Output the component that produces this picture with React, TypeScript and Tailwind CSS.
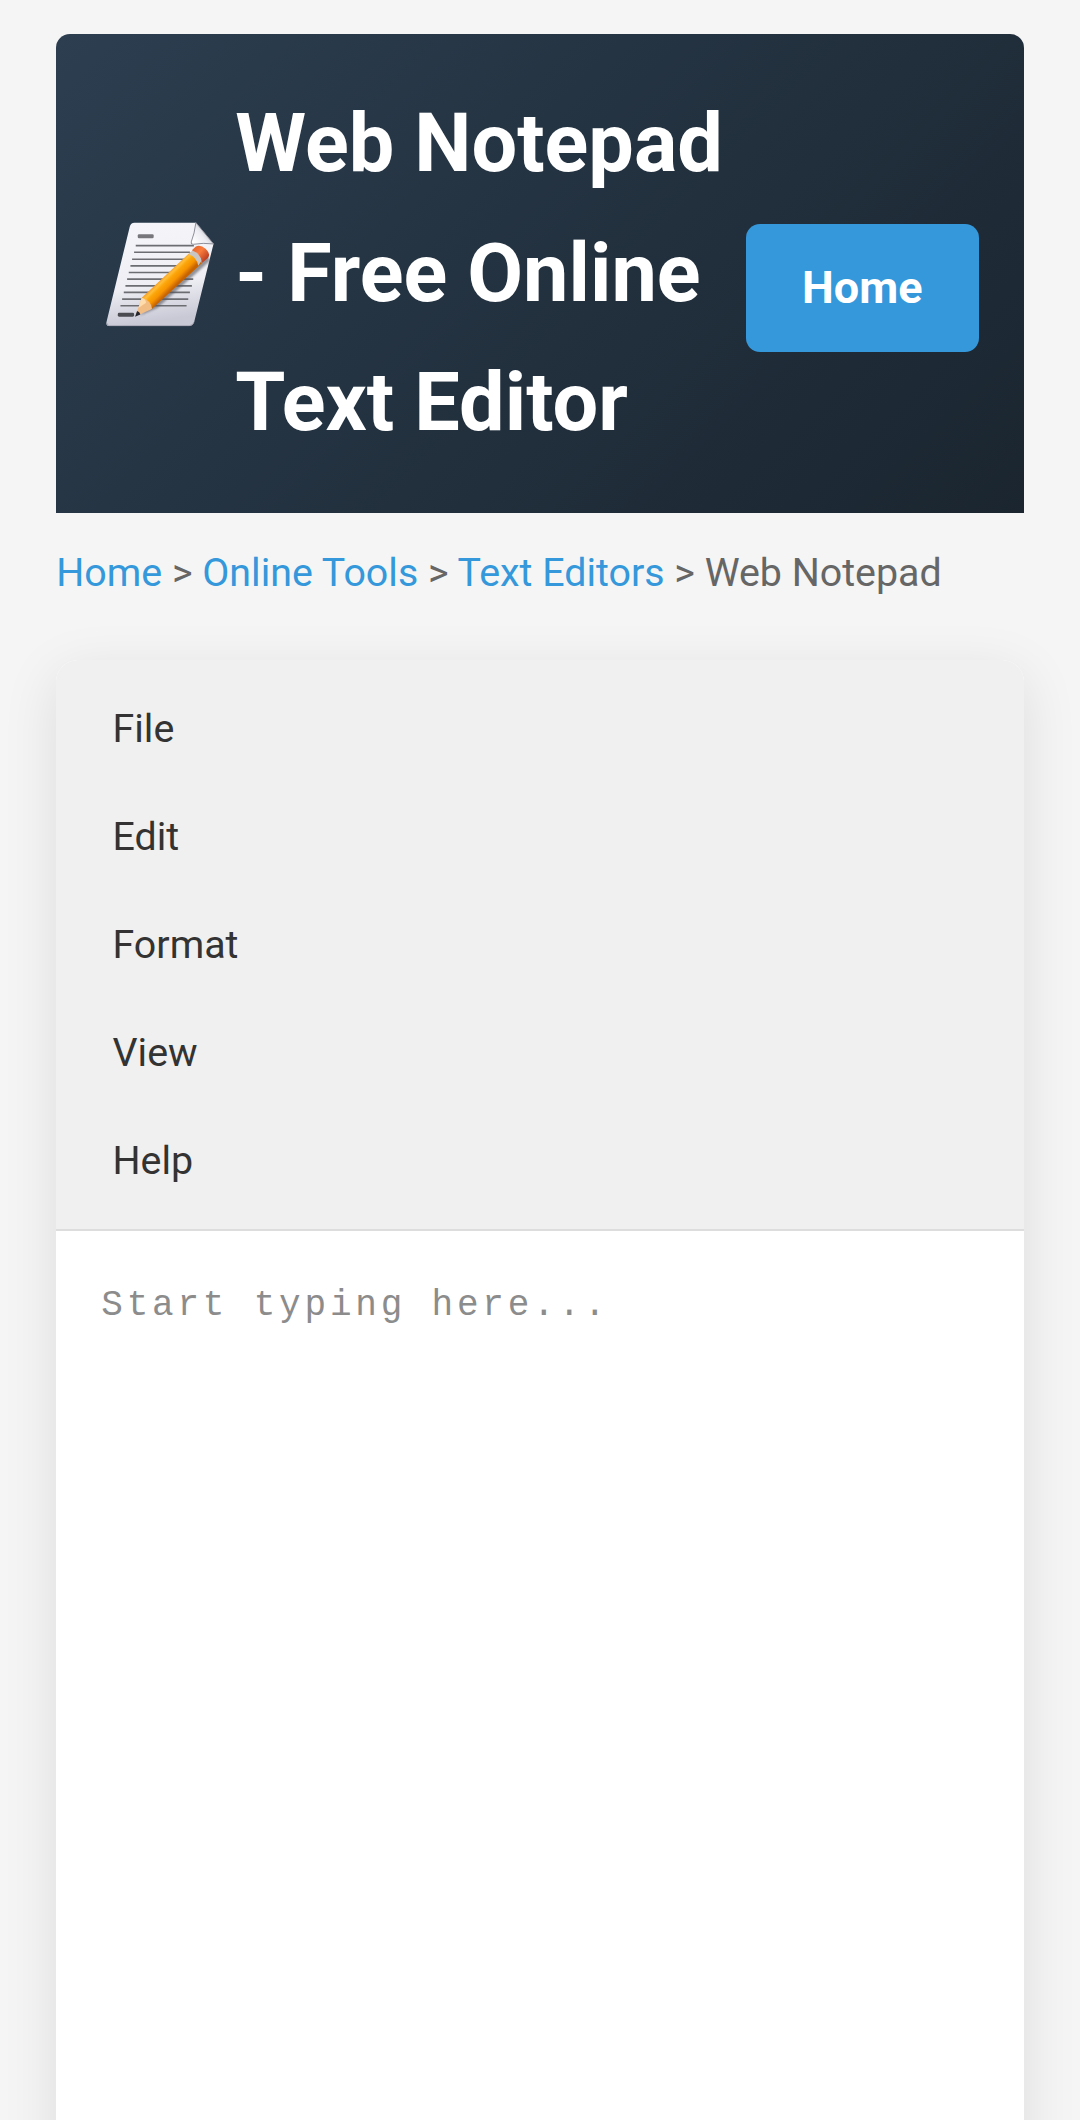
const menuItems = ["File", "Edit", "Format", "View", "Help"];

const ruledLines = [
  [137, 137, 312],
  [132, 157, 300],
  [126, 178, 300],
  [121, 198, 300],
  [116, 218, 300],
  [111, 238, 310],
  [106, 258, 306],
  [101, 278, 300],
  [96, 298, 295],
  [91, 318, 290],
];

function MemoIcon() {
  return (
    <svg viewBox="45 60 330 325" className="h-[108px] w-[110px] shrink-0" aria-hidden="true">
      <defs>
        <linearGradient id="paper" x1="0" y1="0" x2="0.15" y2="1">
          <stop offset="0" stopColor="#f6f6fa" />
          <stop offset="0.65" stopColor="#eeeef4" />
          <stop offset="1" stopColor="#c9c9d6" />
        </linearGradient>
        <linearGradient id="curl" x1="0" y1="0.8" x2="0.8" y2="0.2">
          <stop offset="0" stopColor="#ffffff" />
          <stop offset="0.5" stopColor="#ececf2" />
          <stop offset="1" stopColor="#b5b5c0" />
        </linearGradient>
        <linearGradient id="barrel" gradientUnits="userSpaceOnUse" x1="222" y1="222" x2="256" y2="257">
          <stop offset="0" stopColor="#f08a18" />
          <stop offset="0.28" stopColor="#ffbe3a" />
          <stop offset="0.45" stopColor="#fca60a" />
          <stop offset="0.72" stopColor="#f79400" />
          <stop offset="1" stopColor="#c86400" />
        </linearGradient>
        <linearGradient id="eraser" gradientUnits="userSpaceOnUse" x1="312" y1="145" x2="350" y2="180">
          <stop offset="0" stopColor="#e8672c" />
          <stop offset="0.4" stopColor="#fa7c3c" />
          <stop offset="1" stopColor="#b83a20" />
        </linearGradient>
        <filter id="soft" x="-20%" y="-20%" width="140%" height="140%">
          <feGaussianBlur stdDeviation="4" />
        </filter>
      </defs>
      <path d="M133 68H318L371 132L313 366Q309 379 298 379H58Q46 379 49 367L119 80Q122 68 133 68Z" fill="url(#paper)" />
      <path d="M50 370Q50 378 58 378H298Q309 378 313 366" fill="none" stroke="#9696a3" strokeWidth="2" />
      <g stroke="#6c6c73" strokeWidth="5">
        {ruledLines.map(([x, y, end]) => (
          <path key={y} d={`M${x} ${y}H${end}`} />
        ))}
      </g>
      <rect x="143" y="103" width="48" height="12" rx="4" fill="#77777b" />
      <rect x="83" y="339" width="49" height="12" rx="4" fill="#4b4b52" />
      <path d="M318 68Q314 101 304 126Q302 135 311 133Q339 128 371 132Z" fill="url(#curl)" stroke="#8f8f9a" strokeWidth="3" />
      <path d="M148 348L202 325L361 183L345 155L190 310Z" fill="#55555f" opacity="0.6" filter="url(#soft)" />
      <path d="M155 294L302 156L336 190L183 330Q180 310 155 294Z" fill="url(#barrel)" />
      <path d="M155 294L136 350L186 328Q185 303 155 294Z" fill="#f2bd85" />
      <path d="M155 294L145 325L168 309Q167 297 155 294Z" fill="#ffdcac" />
      <path d="M141 334L135 351L151 344Q149 336 141 334Z" fill="#25252d" />
      <path d="M296 163L309 150Q331 160 336 181L325 198Q321 171 296 163Z" fill="#c9c5c3" />
      <path d="M306 151L318 140Q331 133 348 147Q364 163 354 174L337 189Q332 160 306 151Z" fill="url(#eraser)" />
    </svg>
  );
}

export default function App() {
  return (
    <div className="flex h-[2120px] flex-col overflow-hidden bg-[#f5f5f5] px-[56.25px] pt-[34px] font-[Roboto,sans-serif] text-[#333]">
      <header className="flex h-[479px] shrink-0 items-center rounded-t-[14px] bg-[linear-gradient(135deg,#2c3e50,#1a252f)] pr-[45px] pl-[49px] text-white">
        <MemoIcon />
        <h1 className="ml-[20px] flex-1 text-[81px] leading-[129.6px] font-bold whitespace-nowrap">
          Web Notepad
          <br />- Free Online
          <br />
          Text Editor
        </h1>
        <a className="mt-7 flex h-32 w-[233px] items-center justify-center rounded-[14px] bg-[#3498db] text-[45px] font-bold">
          Home
        </a>
      </header>
      <nav className="mt-[28px] h-[65px] shrink-0 text-[39.375px] leading-[63px] whitespace-nowrap text-[#666]">
        <a className="text-[#3498db]">Home</a> &gt; <a className="text-[#3498db]">Online Tools</a> &gt;{" "}
        <a className="text-[#3498db]">Text Editors</a> &gt; Web Notepad
      </nav>
      <main className="mt-[54px] flex h-[1600px] shrink-0 flex-col rounded-t-[22px] bg-white shadow-[0_14px_56px_rgba(0,0,0,0.1)]">
        <ul className="rounded-t-[22px] border-b-[2px] border-[#ddd] bg-[#f0f0f0] pt-[15px] pb-[14px]">
          {menuItems.map((item) => (
            <li key={item} className="flex h-[108px] items-center px-[56.25px] text-[39.375px]">
              {item}
            </li>
          ))}
        </ul>
        <textarea
          className="w-full flex-1 resize-none px-[45px] pt-[43px] font-['Liberation_Mono',monospace] text-[36px] leading-[63px] tracking-[3.8px] outline-none placeholder:text-[#8c8c8c]"
          placeholder="Start typing here..."
        />
      </main>
    </div>
  );
}
